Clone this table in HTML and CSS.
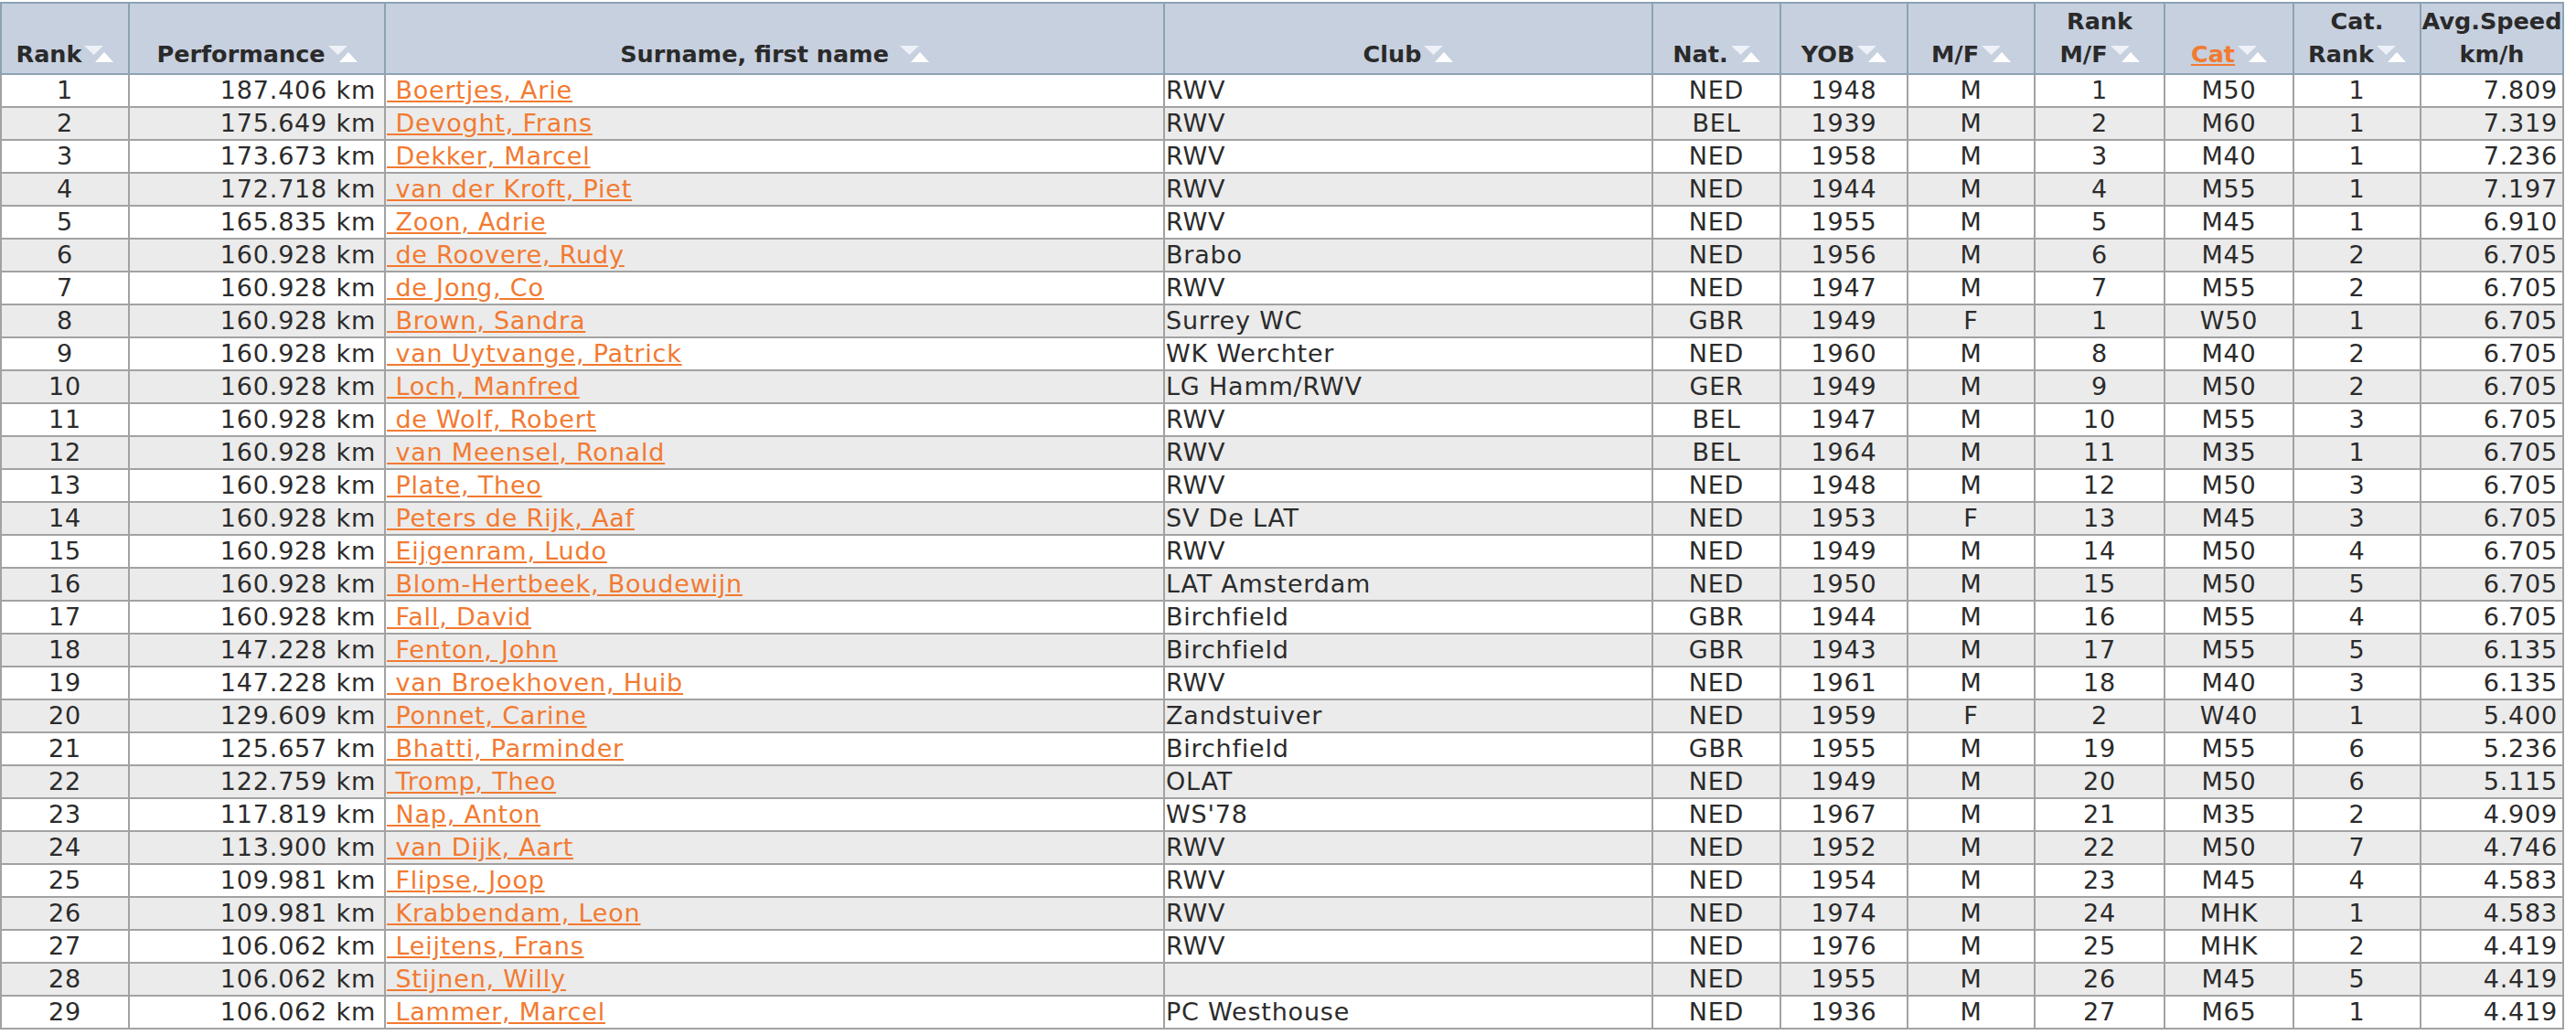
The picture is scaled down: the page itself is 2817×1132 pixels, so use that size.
FILE: index.html
```html
<!DOCTYPE html>
<html>
<head>
<meta charset="utf-8">
<title>Results</title>
<link rel="stylesheet" href="styles.css">
</head>
<body>
<table class="results">
<colgroup>
<col class="c-rank"><col class="c-perf"><col class="c-name"><col class="c-club"><col class="c-nat"><col class="c-yob"><col class="c-mf"><col class="c-rmf"><col class="c-cat"><col class="c-crank"><col class="c-speed">
</colgroup>
<thead>
<tr>
<th>Rank<svg class="sort" viewBox="0 0 32 18" width="32" height="18"><polygon points="0,0 21,0 10.5,10" fill="#eef1f7"/><polygon points="12,18 32,18 22,7" fill="#ffffff"/></svg></th>
<th>Performance<svg class="sort" viewBox="0 0 32 18" width="32" height="18"><polygon points="0,0 21,0 10.5,10" fill="#eef1f7"/><polygon points="12,18 32,18 22,7" fill="#ffffff"/></svg></th>
<th>Surname, first name <svg class="sort" viewBox="0 0 32 18" width="32" height="18"><polygon points="0,0 21,0 10.5,10" fill="#eef1f7"/><polygon points="12,18 32,18 22,7" fill="#ffffff"/></svg></th>
<th>Club<svg class="sort" viewBox="0 0 32 18" width="32" height="18"><polygon points="0,0 21,0 10.5,10" fill="#eef1f7"/><polygon points="12,18 32,18 22,7" fill="#ffffff"/></svg></th>
<th>Nat.<svg class="sort" viewBox="0 0 32 18" width="32" height="18"><polygon points="0,0 21,0 10.5,10" fill="#eef1f7"/><polygon points="12,18 32,18 22,7" fill="#ffffff"/></svg></th>
<th>YOB<svg class="sort" viewBox="0 0 32 18" width="32" height="18"><polygon points="0,0 21,0 10.5,10" fill="#eef1f7"/><polygon points="12,18 32,18 22,7" fill="#ffffff"/></svg></th>
<th>M/F<svg class="sort" viewBox="0 0 32 18" width="32" height="18"><polygon points="0,0 21,0 10.5,10" fill="#eef1f7"/><polygon points="12,18 32,18 22,7" fill="#ffffff"/></svg></th>
<th>Rank<br>M/F<svg class="sort" viewBox="0 0 32 18" width="32" height="18"><polygon points="0,0 21,0 10.5,10" fill="#eef1f7"/><polygon points="12,18 32,18 22,7" fill="#ffffff"/></svg></th>
<th><a class="sorted" href="#">Cat</a><svg class="sort" viewBox="0 0 32 18" width="32" height="18"><polygon points="0,0 21,0 10.5,10" fill="#eef1f7"/><polygon points="12,18 32,18 22,7" fill="#ffffff"/></svg></th>
<th>Cat.<br>Rank<svg class="sort" viewBox="0 0 32 18" width="32" height="18"><polygon points="0,0 21,0 10.5,10" fill="#eef1f7"/><polygon points="12,18 32,18 22,7" fill="#ffffff"/></svg></th>
<th>Avg.Speed<br>km/h</th>
</tr>
</thead>
<tbody>
<tr><td>1</td><td class="perf">187.406 km</td><td class="name"><a href="#"> Boertjes, Arie</a></td><td class="club">RWV</td><td>NED</td><td>1948</td><td>M</td><td>1</td><td>M50</td><td>1</td><td class="speed">7.809</td></tr>
<tr><td>2</td><td class="perf">175.649 km</td><td class="name"><a href="#"> Devoght, Frans</a></td><td class="club">RWV</td><td>BEL</td><td>1939</td><td>M</td><td>2</td><td>M60</td><td>1</td><td class="speed">7.319</td></tr>
<tr><td>3</td><td class="perf">173.673 km</td><td class="name"><a href="#"> Dekker, Marcel</a></td><td class="club">RWV</td><td>NED</td><td>1958</td><td>M</td><td>3</td><td>M40</td><td>1</td><td class="speed">7.236</td></tr>
<tr><td>4</td><td class="perf">172.718 km</td><td class="name"><a href="#"> van der Kroft, Piet</a></td><td class="club">RWV</td><td>NED</td><td>1944</td><td>M</td><td>4</td><td>M55</td><td>1</td><td class="speed">7.197</td></tr>
<tr><td>5</td><td class="perf">165.835 km</td><td class="name"><a href="#"> Zoon, Adrie</a></td><td class="club">RWV</td><td>NED</td><td>1955</td><td>M</td><td>5</td><td>M45</td><td>1</td><td class="speed">6.910</td></tr>
<tr><td>6</td><td class="perf">160.928 km</td><td class="name"><a href="#"> de Roovere, Rudy</a></td><td class="club">Brabo</td><td>NED</td><td>1956</td><td>M</td><td>6</td><td>M45</td><td>2</td><td class="speed">6.705</td></tr>
<tr><td>7</td><td class="perf">160.928 km</td><td class="name"><a href="#"> de Jong, Co</a></td><td class="club">RWV</td><td>NED</td><td>1947</td><td>M</td><td>7</td><td>M55</td><td>2</td><td class="speed">6.705</td></tr>
<tr><td>8</td><td class="perf">160.928 km</td><td class="name"><a href="#"> Brown, Sandra</a></td><td class="club">Surrey WC</td><td>GBR</td><td>1949</td><td>F</td><td>1</td><td>W50</td><td>1</td><td class="speed">6.705</td></tr>
<tr><td>9</td><td class="perf">160.928 km</td><td class="name"><a href="#"> van Uytvange, Patrick</a></td><td class="club">WK Werchter</td><td>NED</td><td>1960</td><td>M</td><td>8</td><td>M40</td><td>2</td><td class="speed">6.705</td></tr>
<tr><td>10</td><td class="perf">160.928 km</td><td class="name"><a href="#"> Loch, Manfred</a></td><td class="club">LG Hamm/RWV</td><td>GER</td><td>1949</td><td>M</td><td>9</td><td>M50</td><td>2</td><td class="speed">6.705</td></tr>
<tr><td>11</td><td class="perf">160.928 km</td><td class="name"><a href="#"> de Wolf, Robert</a></td><td class="club">RWV</td><td>BEL</td><td>1947</td><td>M</td><td>10</td><td>M55</td><td>3</td><td class="speed">6.705</td></tr>
<tr><td>12</td><td class="perf">160.928 km</td><td class="name"><a href="#"> van Meensel, Ronald</a></td><td class="club">RWV</td><td>BEL</td><td>1964</td><td>M</td><td>11</td><td>M35</td><td>1</td><td class="speed">6.705</td></tr>
<tr><td>13</td><td class="perf">160.928 km</td><td class="name"><a href="#"> Plate, Theo</a></td><td class="club">RWV</td><td>NED</td><td>1948</td><td>M</td><td>12</td><td>M50</td><td>3</td><td class="speed">6.705</td></tr>
<tr><td>14</td><td class="perf">160.928 km</td><td class="name"><a href="#"> Peters de Rijk, Aaf</a></td><td class="club">SV De LAT</td><td>NED</td><td>1953</td><td>F</td><td>13</td><td>M45</td><td>3</td><td class="speed">6.705</td></tr>
<tr><td>15</td><td class="perf">160.928 km</td><td class="name"><a href="#"> Eijgenram, Ludo</a></td><td class="club">RWV</td><td>NED</td><td>1949</td><td>M</td><td>14</td><td>M50</td><td>4</td><td class="speed">6.705</td></tr>
<tr><td>16</td><td class="perf">160.928 km</td><td class="name"><a href="#"> Blom-Hertbeek, Boudewijn</a></td><td class="club">LAT Amsterdam</td><td>NED</td><td>1950</td><td>M</td><td>15</td><td>M50</td><td>5</td><td class="speed">6.705</td></tr>
<tr><td>17</td><td class="perf">160.928 km</td><td class="name"><a href="#"> Fall, David</a></td><td class="club">Birchfield</td><td>GBR</td><td>1944</td><td>M</td><td>16</td><td>M55</td><td>4</td><td class="speed">6.705</td></tr>
<tr><td>18</td><td class="perf">147.228 km</td><td class="name"><a href="#"> Fenton, John</a></td><td class="club">Birchfield</td><td>GBR</td><td>1943</td><td>M</td><td>17</td><td>M55</td><td>5</td><td class="speed">6.135</td></tr>
<tr><td>19</td><td class="perf">147.228 km</td><td class="name"><a href="#"> van Broekhoven, Huib</a></td><td class="club">RWV</td><td>NED</td><td>1961</td><td>M</td><td>18</td><td>M40</td><td>3</td><td class="speed">6.135</td></tr>
<tr><td>20</td><td class="perf">129.609 km</td><td class="name"><a href="#"> Ponnet, Carine</a></td><td class="club">Zandstuiver</td><td>NED</td><td>1959</td><td>F</td><td>2</td><td>W40</td><td>1</td><td class="speed">5.400</td></tr>
<tr><td>21</td><td class="perf">125.657 km</td><td class="name"><a href="#"> Bhatti, Parminder</a></td><td class="club">Birchfield</td><td>GBR</td><td>1955</td><td>M</td><td>19</td><td>M55</td><td>6</td><td class="speed">5.236</td></tr>
<tr><td>22</td><td class="perf">122.759 km</td><td class="name"><a href="#"> Tromp, Theo</a></td><td class="club">OLAT</td><td>NED</td><td>1949</td><td>M</td><td>20</td><td>M50</td><td>6</td><td class="speed">5.115</td></tr>
<tr><td>23</td><td class="perf">117.819 km</td><td class="name"><a href="#"> Nap, Anton</a></td><td class="club">WS'78</td><td>NED</td><td>1967</td><td>M</td><td>21</td><td>M35</td><td>2</td><td class="speed">4.909</td></tr>
<tr><td>24</td><td class="perf">113.900 km</td><td class="name"><a href="#"> van Dijk, Aart</a></td><td class="club">RWV</td><td>NED</td><td>1952</td><td>M</td><td>22</td><td>M50</td><td>7</td><td class="speed">4.746</td></tr>
<tr><td>25</td><td class="perf">109.981 km</td><td class="name"><a href="#"> Flipse, Joop</a></td><td class="club">RWV</td><td>NED</td><td>1954</td><td>M</td><td>23</td><td>M45</td><td>4</td><td class="speed">4.583</td></tr>
<tr><td>26</td><td class="perf">109.981 km</td><td class="name"><a href="#"> Krabbendam, Leon</a></td><td class="club">RWV</td><td>NED</td><td>1974</td><td>M</td><td>24</td><td>MHK</td><td>1</td><td class="speed">4.583</td></tr>
<tr><td>27</td><td class="perf">106.062 km</td><td class="name"><a href="#"> Leijtens, Frans</a></td><td class="club">RWV</td><td>NED</td><td>1976</td><td>M</td><td>25</td><td>MHK</td><td>2</td><td class="speed">4.419</td></tr>
<tr><td>28</td><td class="perf">106.062 km</td><td class="name"><a href="#"> Stijnen, Willy</a></td><td class="club"></td><td>NED</td><td>1955</td><td>M</td><td>26</td><td>M45</td><td>5</td><td class="speed">4.419</td></tr>
<tr><td>29</td><td class="perf">106.062 km</td><td class="name"><a href="#"> Lammer, Marcel</a></td><td class="club">PC Westhouse</td><td>NED</td><td>1936</td><td>M</td><td>27</td><td>M65</td><td>1</td><td class="speed">4.419</td></tr>
</tbody>
</table>
</body>
</html>
```

FILE: styles.css
```css
html, body {
  margin: 0;
  padding: 0;
  background: #ffffff;
}
body {
  padding-top: 2px;
  font-family: "DejaVu Sans", Verdana, sans-serif;
  color: #2b2b2b;
}
.results {
  border-collapse: collapse;
  table-layout: fixed;
  width: 2803px;
}
.c-rank { width: 140px; }
.c-perf { width: 280px; }
.c-name { width: 852px; }
.c-club { width: 534px; }
.c-nat { width: 140px; }
.c-yob { width: 139px; }
.c-mf { width: 139px; }
.c-rmf { width: 142px; }
.c-cat { width: 141px; }
.c-crank { width: 139px; }
.c-speed { width: 156px; }

.results th {
  background: #c7d0df;
  border: 2px solid #8ca2b2;
  font-weight: bold;
  font-size: 25.5px;
  line-height: 36px;
  color: #2a2a2a;
  text-align: center;
  vertical-align: bottom;
  padding: 1px 0 3px 0;
  white-space: nowrap;
}
.sort {
  margin-left: 3px;
  vertical-align: baseline;
}
.sorted {
  color: #f27a31;
  text-decoration: underline;
}
.results td {
  border: 2px solid #a2a2a2;
  font-size: 27px;
  letter-spacing: 0.8px;
  height: 34px;
  line-height: 34px;
  padding: 0 1px;
  text-align: center;
  white-space: nowrap;
  overflow: hidden;
}
.results tbody tr:nth-child(even) td {
  background: #ebebeb;
}
.results td.perf {
  text-align: right;
  padding-right: 9px;
}
.results td.name,
.results td.club {
  text-align: left;
}
.results td.speed {
  text-align: right;
  padding-right: 5px;
}
.name a {
  color: #f27a31;
  text-decoration: underline;
  white-space: pre;
}
```
